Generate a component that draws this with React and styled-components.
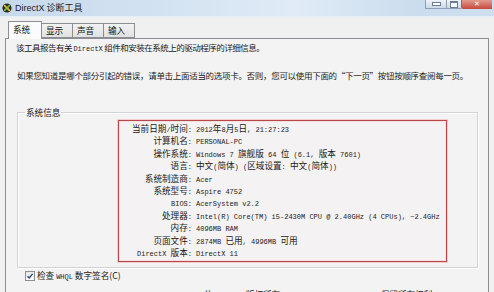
import styled, { createGlobalStyle } from 'styled-components';

const cjk = `"Noto Sans CJK SC", "Noto Sans", sans-serif`;
const mono = `"Liberation Mono", "DejaVu Sans Mono", monospace`;

const GlobalStyle = createGlobalStyle`
  html, body {
    margin: 0;
    padding: 0;
    background: #f0f0f0;
    overflow: hidden;
  }
  #root {
    width: 494px;
    height: 292px;
  }
`;

const infoRows = [
  ['当前日期/时间', '2012年8月5日, 21:27:23'],
  ['计算机名', 'PERSONAL-PC'],
  ['操作系统', 'Windows 7 旗舰版 64 位 (6.1, 版本 7601)'],
  ['语言', '中文(简体) (区域设置: 中文(简体))'],
  ['系统制造商', 'Acer'],
  ['系统型号', 'Aspire 4752'],
  ['BIOS', 'AcerSystem v2.2'],
  ['处理器', 'Intel(R) Core(TM) i5-2430M CPU @ 2.40GHz (4 CPUs), ~2.4GHz'],
  ['内存', '4096MB RAM'],
  ['页面文件', '2874MB 已用, 4996MB 可用'],
  ['DirectX 版本', 'DirectX 11'],
];

const tabs = ['系统', '显示', '声音', '输入'];

// split a string into CJK / latin runs so each gets its own font
const mix = (text) =>
  text
    .split(/([\u3000-\u9fff\uff00-\uffef]+)/)
    .filter(Boolean)
    .map((part, i) =>
      /[\u3000-\u9fff\uff00-\uffef]/.test(part) ? (
        <Cjk key={i}>{part}</Cjk>
      ) : (
        <Latin key={i}>{part}</Latin>
      )
    );

const DxIcon = () => (
  <svg width="10" height="10" viewBox="0 0 10 10">
    <circle cx="5" cy="5" r="4.6" fill="#2b2b2b" />
    <path d="M2.6 2.6 L7.4 7.4" stroke="#e9c22a" strokeWidth="1.6" strokeLinecap="round" />
    <path d="M7.4 2.6 L2.6 7.4" stroke="#7bbf45" strokeWidth="1.6" strokeLinecap="round" />
  </svg>
);

const CheckMark = () => (
  <svg width="8" height="8" viewBox="0 0 8 8">
    <path d="M1.5 4.2 L3.2 6 L6.6 1.8" fill="none" stroke="#2a3f78" strokeWidth="1.3" />
  </svg>
);

export default function App() {
  return (
    <>
      <GlobalStyle />
      <Window>
        <TitleBar>
          <TitleLeft>
            <DxIcon />
            <TitleText>
              <Latin $sans>DirectX</Latin> 诊断工具
            </TitleText>
          </TitleLeft>
          <Controls>
            <CtrlButton $w={20}>
              <MinGlyph />
            </CtrlButton>
            <CtrlButton $w={14}>
              <MaxGlyph />
            </CtrlButton>
            <CloseButton>✕</CloseButton>
          </Controls>
        </TitleBar>

        <Client>
          <TabStrip>
            {tabs.map((t, i) => (
              <Tab key={t} $active={i === 0} $w={i === 0 ? 34 : 32}>
                {t}
              </Tab>
            ))}
          </TabStrip>

          <Panel>
            <Intro $tight>
              该工具报告有关 <Latin>DirectX</Latin> 组件和安装在系统上的驱动程序的详细信息。
            </Intro>
            <Intro $gap={16}>
              如果您知道是哪个部分引起的错误，请单击上面适当的选项卡。否则，您可以使用下面的“下一页”按钮按顺序查阅每一页。
            </Intro>

            <GroupBox>
              <Legend>系统信息</Legend>
              <InfoBox>
                {infoRows.map(([label, value]) => (
                  <InfoRow key={label}>
                    <InfoLabel>
                      {mix(label)}
                      <Latin>:</Latin>
                    </InfoLabel>
                    <InfoValue>{mix(value)}</InfoValue>
                  </InfoRow>
                ))}
              </InfoBox>
            </GroupBox>

            <CheckRow>
              <CheckBox>
                <CheckMark />
              </CheckBox>
              <span>
                检查 <Latin>WHQL</Latin> 数字签名(C)
              </span>
            </CheckRow>

            <Footer>
              <Latin>DxDiag 6.01.7601.17514 32</Latin> 位 <Latin>Unicode</Latin> 版权所有{' '}
              <Latin>(C) 1998-2006 Microsoft</Latin> 保留所有权利。
            </Footer>
          </Panel>
        </Client>
      </Window>
    </>
  );
}

const Window = styled.div`
  display: flex;
  flex-direction: column;
  width: 494px;
  height: 292px;
  overflow: hidden;
  background: #f0f0f0;
  font-family: ${cjk};
  color: #1a1a1a;
`;

const TitleBar = styled.div`
  display: flex;
  justify-content: space-between;
  align-items: flex-start;
  height: 16px;
  flex-shrink: 0;
  background: linear-gradient(
    90deg,
    #c6d9ec 0%,
    #d4e3f2 35%,
    #e0ebf6 60%,
    #cadcee 85%,
    #cfdfef 100%
  );
  border-bottom: 1px solid #e6edf5;
`;

const TitleLeft = styled.div`
  display: flex;
  align-items: center;
  gap: 3px;
  padding: 2px 0 0 2px;
`;

const TitleText = styled.span`
  font-size: 9px;
  line-height: 11px;
  color: #1b1b1b;
  white-space: nowrap;
`;

const Controls = styled.div`
  display: flex;
  align-items: flex-start;
  margin-right: 2px;
`;

const CtrlButton = styled.div`
  display: flex;
  align-items: center;
  justify-content: center;
  width: ${(p) => p.$w}px;
  height: 8px;
  border: 1px solid #8d9fb6;
  border-top: none;
  border-right: none;
  background: linear-gradient(#eef3f9, #ccd9e8);
`;

const MinGlyph = styled.div`
  width: 7px;
  height: 2px;
  border: 1px solid #6c7d93;
  background: #fff;
`;

const MaxGlyph = styled.div`
  width: 6px;
  height: 4px;
  border: 1px solid #6c7d93;
  border-top-width: 2px;
  background: #f6f8fb;
`;

const CloseButton = styled.div`
  display: flex;
  align-items: center;
  justify-content: center;
  width: 30px;
  height: 9px;
  background: linear-gradient(#e29a8e, #c6493c);
  border-left: 1px solid #8d6a6a;
  color: #fff;
  font-family: "DejaVu Sans", sans-serif;
  font-size: 7px;
  line-height: 9px;
  border-bottom-left-radius: 2px;
`;

const Client = styled.div`
  display: flex;
  flex-direction: column;
  flex: 1;
  padding: 0 5px 0 5px;
  background: #f0f0f0;
`;

const TabStrip = styled.div`
  display: flex;
  align-items: flex-end;
  height: 21px;
  padding-left: 3px;
  flex-shrink: 0;
`;

const Tab = styled.div`
  position: relative;
  z-index: ${(p) => (p.$active ? 2 : 1)};
  width: ${(p) => p.$w}px;
  height: ${(p) => (p.$active ? 18 : 15)}px;
  margin-bottom: ${(p) => (p.$active ? -1 : 0)}px;
  margin-left: ${(p) => (p.$active ? 0 : -1)}px;
  box-sizing: border-box;
  border: 1px solid #8c8e94;
  border-bottom: ${(p) => (p.$active ? 'none' : '1px solid #8c8e94')};
  background: ${(p) => (p.$active ? '#fbfbfb' : 'linear-gradient(#f2f2f2, #e1e1e1)')};
  font-size: 8.6px;
  line-height: ${(p) => (p.$active ? 15 : 13)}px;
  padding-left: 4px;
  color: #111;
  white-space: nowrap;
`;

const Panel = styled.div`
  display: flex;
  flex-direction: column;
  flex: 1;
  border: 1px solid #8c8e94;
  border-bottom: none;
  background: #f3f3f3;
  padding: 2px 10px 0 11px;
`;

const Intro = styled.div`
  font-size: 8.5px;
  line-height: 12px;
  height: 12px;
  margin-top: ${(p) => p.$gap || 0}px;
  margin-left: ${(p) => (p.$tight ? -1 : 0)}px;
  white-space: nowrap;
  letter-spacing: ${(p) => (p.$tight ? -0.5 : -0.3)}px;
`;

const GroupBox = styled.fieldset`
  margin: 25px 0 0 0;
  padding: 0 0 5px 0;
  border: 1px solid #d3d3d3;
  box-shadow: inset 1px 1px 0 #fff, 1px 1px 0 #fff;
  min-width: 0;
`;

const Legend = styled.legend`
  margin-left: 7px;
  padding: 0 1px;
  font-size: 8.6px;
  line-height: 12px;
  color: #1a1a1a;
`;

const InfoBox = styled.div`
  width: 329px;
  margin: 2px 0 0 100px;
  box-sizing: border-box;
  padding: 1px 0 3px 0;
  border: 1px solid #b9484a;
  box-shadow: 0 0 0 1px #f2cfcf, inset 0 0 0 1px #f6dede;
  background: #f4f2f2;
`;

const InfoRow = styled.div`
  display: grid;
  grid-template-columns: 73px 1fr;
  column-gap: 4px;
  align-items: center;
  height: 12.4px;
  white-space: nowrap;
`;

const InfoLabel = styled.div`
  text-align: right;
  font-size: 8.6px;
  line-height: 12.4px;
`;

const InfoValue = styled.div`
  font-size: 8.6px;
  line-height: 12.4px;
  overflow: hidden;
`;

const Cjk = styled.span`
  font-family: ${cjk};
  font-size: 8.6px;
`;

const Latin = styled.span`
  font-family: ${(p) => (p.$sans ? `"Liberation Sans", sans-serif` : mono)};
  font-size: ${(p) => (p.$sans ? 9 : 7)}px;
  letter-spacing: 0;
  color: #222;
`;

const CheckRow = styled.div`
  display: flex;
  align-items: center;
  gap: 2px;
  height: 12px;
  margin: 2px 0 0 8px;
  font-size: 8.6px;
  line-height: 12px;
  white-space: nowrap;
`;

const CheckBox = styled.div`
  display: flex;
  align-items: center;
  justify-content: center;
  width: 8px;
  height: 8px;
  border: 1px solid #8f8f8f;
  background: linear-gradient(#e8e8e8, #ffffff);
`;

const Footer = styled.div`
  margin: 6px 0 0 80px;
  font-size: 8.6px;
  line-height: 12px;
  white-space: nowrap;
  color: #222;
`;
